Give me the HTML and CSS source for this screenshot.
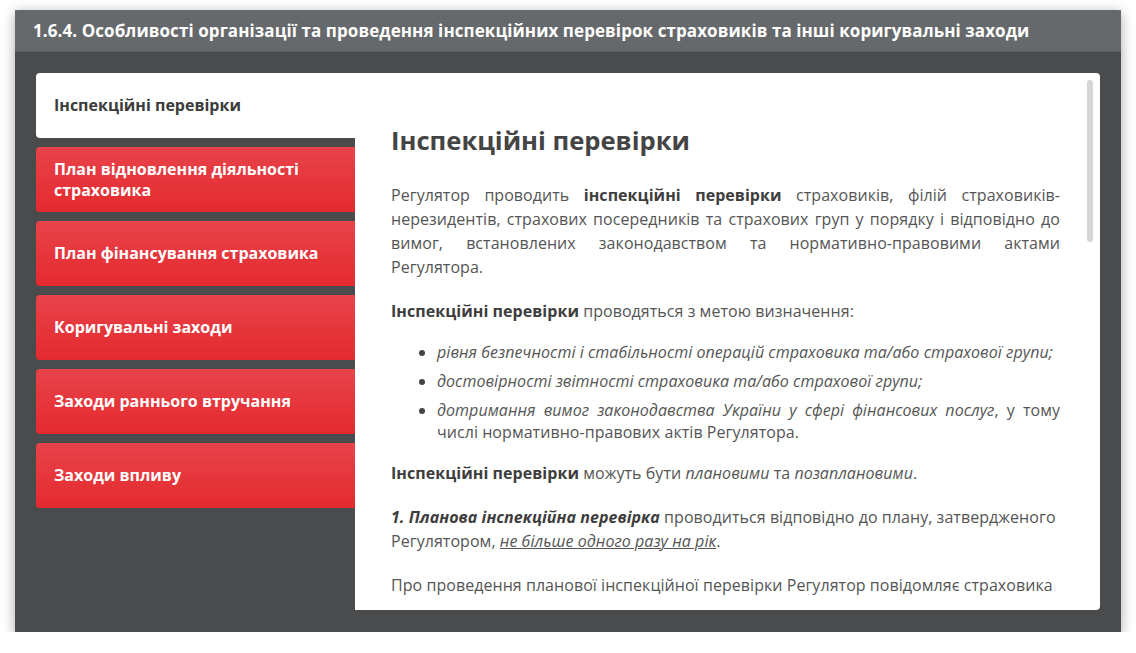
FILE: index.html
```html
<!DOCTYPE html>
<html lang="uk">
<head>
<meta charset="utf-8">
<title>1.6.4</title>
<link rel="stylesheet" href="styles.css">
</head>
<body>
<div class="window">
  <div class="window-header">1.6.4. Особливості організації та проведення інспекційних перевірок страховиків та інші коригувальні заходи</div>
  <div class="window-body">
    <nav class="tabs">
      <div class="tab tab-active">Інспекційні перевірки</div>
      <div class="tab">План відновлення діяльності страховика</div>
      <div class="tab">План фінансування страховика</div>
      <div class="tab">Коригувальні заходи</div>
      <div class="tab">Заходи раннього втручання</div>
      <div class="tab">Заходи впливу</div>
    </nav>
    <main class="panel">
      <div class="scrollbar"></div>
      <div class="panel-scroll">
        <h1 class="panel-title">Інспекційні перевірки</h1>
        <p class="just">Регулятор проводить <b>інспекційні перевірки</b> страховиків, філій страховиків-нерезидентів, страхових посередників та страхових груп у порядку і відповідно до вимог, встановлених законодавством та нормативно-правовими актами Регулятора.</p>
        <p><b>Інспекційні перевірки</b> проводяться з метою визначення:</p>
        <ul class="list">
          <li><i>рівня безпечності і стабільності операцій страховика та/або страхової групи;</i></li>
          <li><i>достовірності звітності страховика та/або страхової групи;</i></li>
          <li class="just"><i>дотримання вимог законодавства України у сфері фінансових послуг</i>, у тому числі нормативно-правових актів Регулятора.</li>
        </ul>
        <p><b>Інспекційні перевірки</b> можуть бути <i>плановими</i> та <i>позаплановими</i>.</p>
        <p><b><i>1. Планова інспекційна перевірка</i></b> проводиться відповідно до плану, затвердженого Регулятором, <i><u>не більше одного разу на рік</u></i>.</p>
        <p>Про проведення планової інспекційної перевірки Регулятор повідомляє страховика не пізніше ніж за 10 робочих днів до дати її початку.</p>
      </div>
    </main>
  </div>
</div>
</body>
</html>
```

FILE: styles.css
```css
html, body {
  margin: 0;
  padding: 0;
  background: #ffffff;
}
body {
  font-family: "Open Sans", "Liberation Sans", sans-serif;
  padding: 10px 15px 0 15px;
}
.window {
  width: 1106px;
  height: 622px;
  background: #4a4b4d;
  box-shadow: 0 3px 12px rgba(0, 0, 0, 0.35);
  display: flex;
  flex-direction: column;
}
.window-header {
  height: 42px;
  flex: none;
  box-sizing: border-box;
  padding: 0 18px;
  background: #66696c;
  color: #ffffff;
  font-weight: 700;
  font-size: 17px;
  letter-spacing: 0.08px;
  line-height: 42px;
  white-space: nowrap;
  border-bottom: 1px solid #5c5f62;
}
.window-body {
  flex: 1;
  min-height: 0;
  display: flex;
  padding: 21px 21px 22px 21px;
}
.tabs {
  width: 319px;
  flex: none;
  display: flex;
  flex-direction: column;
  gap: 9px;
}
.tab {
  height: 65px;
  box-sizing: border-box;
  padding: 0 18px;
  display: flex;
  align-items: center;
  color: #ffffff;
  font-weight: 700;
  font-size: 16px;
  line-height: 21px;
  border-radius: 4px 0 0 4px;
  background: linear-gradient(to bottom, #e8434a 0%, #e42a2e 100%);
}
.tab-active {
  background: #ffffff;
  color: #3b3b3b;
}
.panel {
  position: relative;
  flex: 1;
  display: flex;
  flex-direction: column;
  background: #ffffff;
  border-radius: 0 4px 4px 0;
  padding: 0 40px 10px 36px;
  color: #555555;
  font-size: 16px;
  line-height: 24px;
  letter-spacing: 0.05px;
}
.panel-scroll {
  flex: 1;
  min-height: 0;
  overflow: hidden;
}
.scrollbar {
  position: absolute;
  top: 7px;
  right: 7px;
  width: 6px;
  height: 162px;
  border-radius: 3px;
  background: #d6d6d6;
}
.panel-title {
  margin: 50px 0 24px 0;
  font-size: 25.6px;
  line-height: 36px;
  font-weight: 700;
  color: #444444;
  letter-spacing: 0;
}
.panel p {
  margin: 0 0 20px 0;
}
.panel b {
  color: #3d3d3d;
}
.just {
  text-align: justify;
}
.list {
  margin: -2px 0 18px 0;
  padding: 0 0 0 46px;
  list-style: disc;
}
.list li {
  line-height: 22px;
  margin-bottom: 7px;
}
.list li::marker {
  color: #444444;
}
.panel u {
  text-decoration-thickness: 1px;
}
```
